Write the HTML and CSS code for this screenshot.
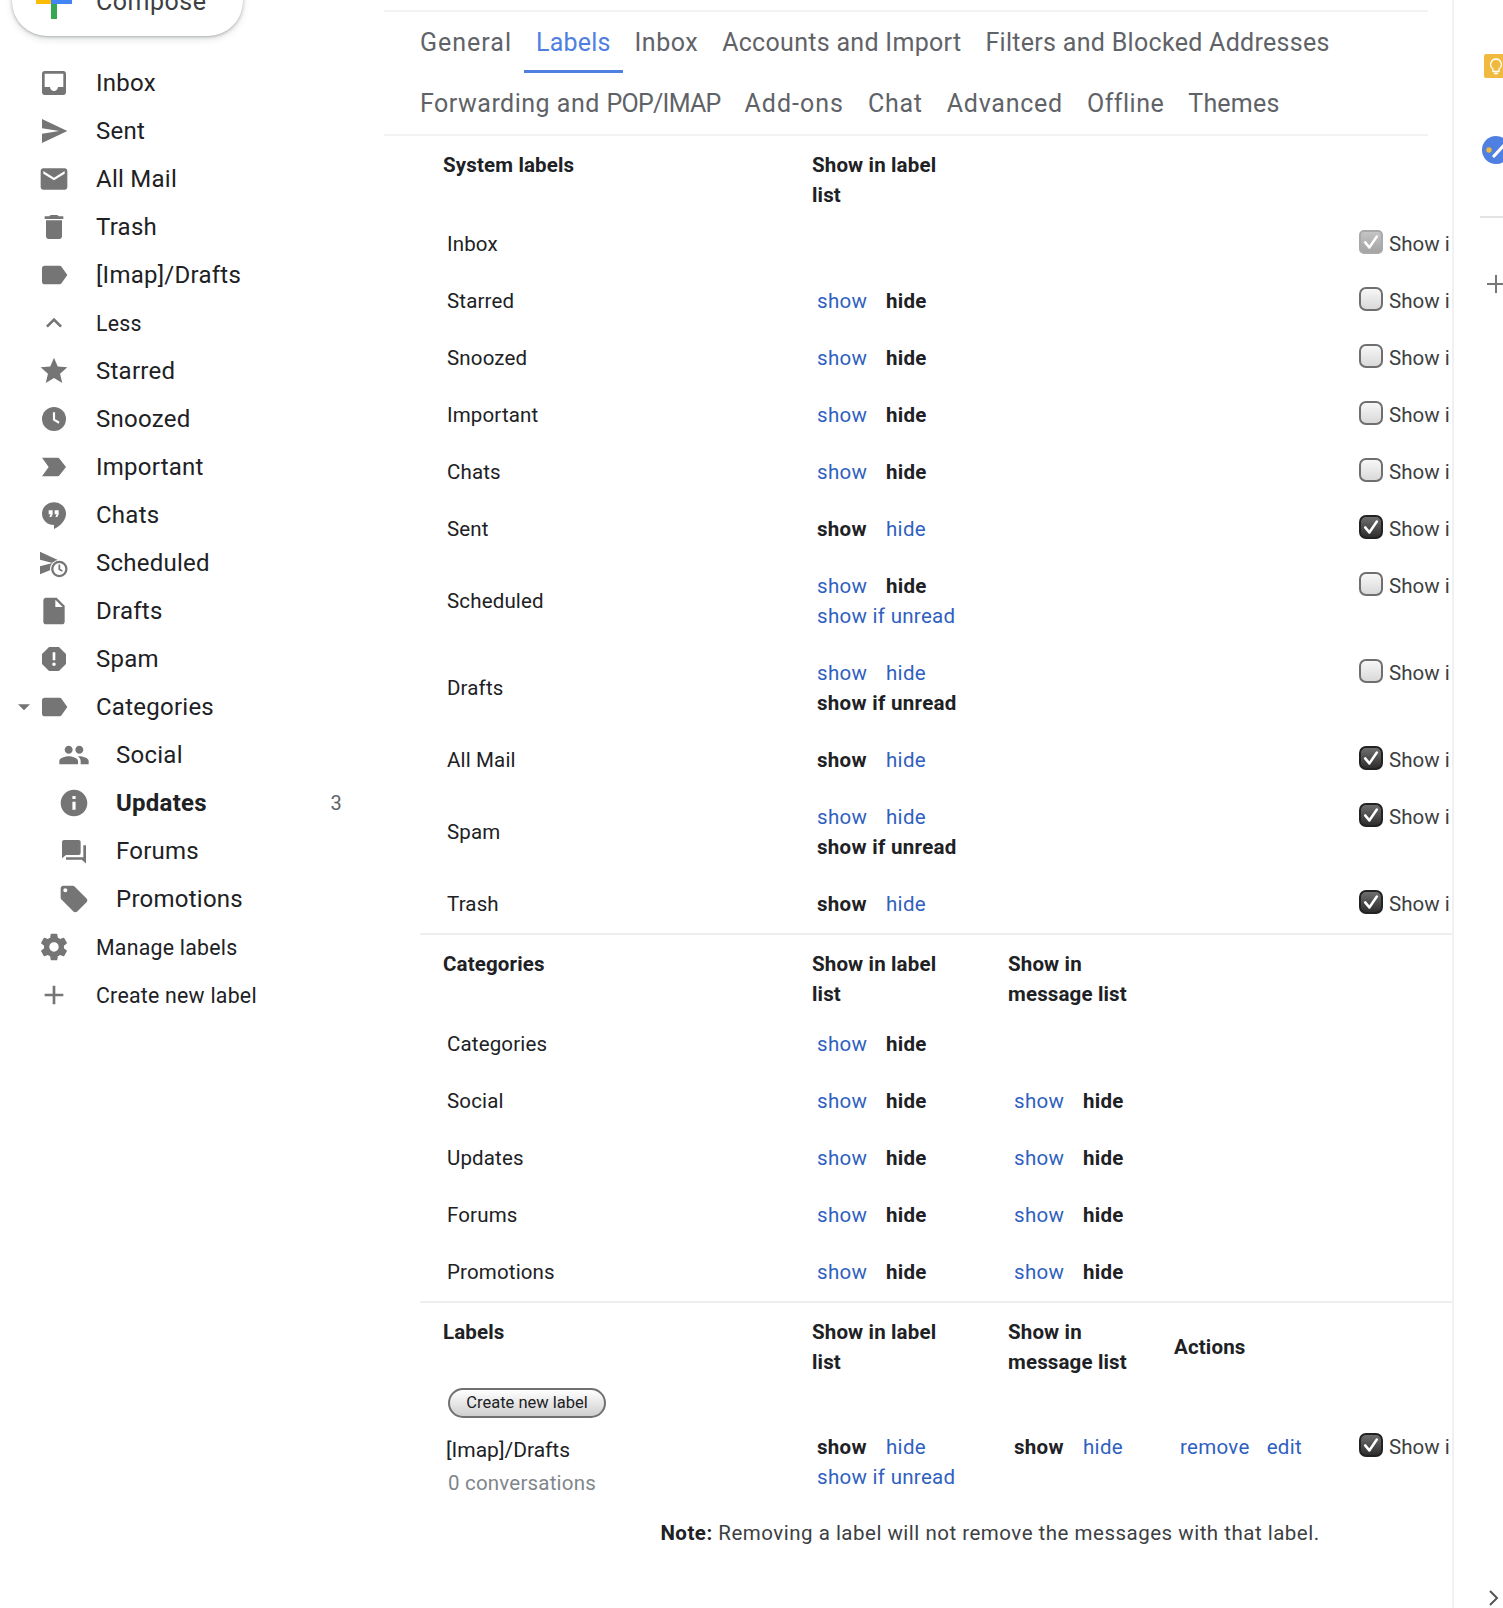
FILE: index.html
```html
<!DOCTYPE html>
<html lang="en">
<head>
<meta charset="utf-8">
<title>Settings - Labels</title>
<link rel="stylesheet" href="styles.css">
</head>
<body>
<svg class="defs" aria-hidden="true">
  <symbol id="i-inbox" viewBox="0 0 24 24"><path d="M19 3H5c-1.1 0-2 .9-2 2v14c0 1.1.9 2 2 2h14c1.1 0 2-.9 2-2V5c0-1.1-.9-2-2-2zm0 12h-4c0 1.66-1.35 3-3 3s-3-1.34-3-3H5V5h14v10z"/></symbol>
  <symbol id="i-sent" viewBox="0 0 24 24"><path d="M3 3v7l13 2-13 2v7l19-9z"/></symbol>
  <symbol id="i-mail" viewBox="0 0 24 24"><path d="M20 4H4c-1.1 0-2 .9-2 2v12c0 1.1.9 2 2 2h16c1.1 0 2-.9 2-2V6c0-1.1-.9-2-2-2zm0 4l-8 5-8-5V6l8 5 8-5v2z"/></symbol>
  <symbol id="i-trash" viewBox="0 0 24 24"><path d="M6 19c0 1.1.9 2 2 2h8c1.1 0 2-.9 2-2V7H6v12zM19 4h-3.5l-1-1h-5l-1 1H5v2h14V4z"/></symbol>
  <symbol id="i-label" viewBox="0 0 24 24"><path d="M17.63 5.84C17.27 5.33 16.67 5 16 5L5 5.01C3.9 5.01 3 5.9 3 7v10c0 1.1.9 1.99 2 1.99L16 19c.67 0 1.27-.33 1.63-.84L22 12l-4.37-6.16z"/></symbol>
  <symbol id="i-less" viewBox="0 0 24 24"><path d="M7.41 15.41L12 10.83l4.59 4.58L18 14l-6-6-6 6z"/></symbol>
  <symbol id="i-star" viewBox="0 0 24 24"><path d="M12 17.27L18.18 21l-1.64-7.03L22 9.24l-7.19-.61L12 2 9.19 8.63 2 9.24l5.46 4.73L5.82 21z"/></symbol>
  <symbol id="i-clock" viewBox="0 0 24 24"><circle cx="12" cy="12" r="9"/><path d="M12 7v5.5l3.8 2.3" fill="none" stroke="#fff" stroke-width="1.6"/></symbol>
  <symbol id="i-important" viewBox="0 0 24 24"><path d="M3 18.99l11.5.01c.67 0 1.27-.33 1.63-.84L21 12l-4.87-6.16c-.36-.51-.96-.84-1.63-.84L3 5.01 8 12l-5 6.99z"/></symbol>
  <symbol id="i-chat" viewBox="0 0 24 24"><path d="M12 2.500c-5 0-9 3.800-9 8.500s4 8.500 9 8.500v3c5-2.400 9-7 9-11.500 0-4.700-4-8.500-9-8.500zM11 11.500l-1 2H8.500l1-2H8V8.500h3zm4.500 0l-1 2H13l1-2h-1.500V8.500h3z"/></symbol>
  <symbol id="i-scheduled" viewBox="0 0 24 24"><path d="M1.500 3.500v6l9.500 2.500-9.500 2.500v6L21 12.500z"/><circle cx="16" cy="16.500" r="7" fill="#fff"/><circle cx="16" cy="16.500" r="5.300" fill="#fff" stroke="currentColor" stroke-width="1.700"/><path d="M16 13.200v3.500l2.300 1.400" fill="none" stroke="currentColor" stroke-width="1.300"/></symbol>
  <symbol id="i-draft" viewBox="0 0 24 24"><path d="M14 2H6c-1.100 0-1.990.9-1.990 2L4 20c0 1.100.89 2 1.990 2H18c1.100 0 2-.9 2-2V8l-6-6zm-1 7V3.500L18.500 9H13z"/></symbol>
  <symbol id="i-spam" viewBox="0 0 24 24"><path d="M15.730 3H8.270L3 8.270v7.460L8.270 21h7.460L21 15.730V8.270L15.730 3zM12 17.300c-.72 0-1.300-.58-1.300-1.300 0-.72.58-1.300 1.300-1.300.72 0 1.300.58 1.300 1.300 0 .72-.58 1.300-1.300 1.300zm1-4.300h-2V7h2v6z"/></symbol>
  <symbol id="i-arrow" viewBox="0 0 24 24"><path d="M7.500 10l4.500 4.500 4.500-4.500z"/></symbol>
  <symbol id="i-people" viewBox="0 0 24 24"><path d="M16 11c1.660 0 2.990-1.340 2.990-3S17.660 5 16 5c-1.660 0-3 1.340-3 3s1.340 3 3 3zm-8 0c1.660 0 2.990-1.340 2.990-3S9.660 5 8 5C6.340 5 5 6.340 5 8s1.340 3 3 3zm0 2c-2.330 0-7 1.170-7 3.500V19h14v-2.500c0-2.330-4.670-3.500-7-3.500zm8 0c-.29 0-.62.02-.97.05 1.160.84 1.970 1.970 1.970 3.450V19h6v-2.500c0-2.330-4.670-3.500-7-3.500z"/></symbol>
  <symbol id="i-info" viewBox="0 0 24 24"><path d="M12 2C6.480 2 2 6.480 2 12s4.480 10 10 10 10-4.480 10-10S17.520 2 12 2zm1.200 15h-2.400v-6h2.400v6zm0-8h-2.400V6.800h2.400V9z"/></symbol>
  <symbol id="i-forum" viewBox="0 0 24 24"><path d="M4.500 3.700h11a1.500 1.500 0 011.500 1.500v8.300a1.500 1.500 0 01-1.500 1.500H6l-3 2.500V5.200a1.500 1.500 0 011.500-1.500zM19 7.700h2v13.600L17.800 18.500H6V16.700h13z"/></symbol>
  <symbol id="i-tag" viewBox="0 0 24 24"><path d="M21.410 11.580l-9-9C12.050 2.220 11.550 2 11 2H4c-1.100 0-2 .9-2 2v7c0 .55.22 1.050.59 1.420l9 9c.36.36.86.58 1.410.58.55 0 1.050-.22 1.410-.59l7-7c.37-.36.59-.86.59-1.410 0-.55-.23-1.060-.59-1.420zM5.500 7C4.670 7 4 6.330 4 5.500S4.670 4 5.500 4 7 4.670 7 5.500 6.330 7 5.500 7z"/></symbol>
  <symbol id="i-gear" viewBox="0 0 24 24"><path d="M19.430 12.980c.04-.32.07-.64.07-.98s-.03-.66-.07-.98l2.110-1.650c.19-.15.24-.42.12-.64l-2-3.460c-.12-.22-.39-.3-.61-.22l-2.490 1c-.52-.4-1.080-.73-1.690-.98l-.38-2.650C14.460 2.180 14.250 2 14 2h-4c-.25 0-.46.18-.49.42l-.38 2.650c-.61.25-1.170.59-1.690.98l-2.490-1c-.23-.09-.49 0-.61.22l-2 3.460c-.13.22-.07.49.12.64l2.110 1.650c-.04.32-.07.65-.07.98s.03.66.07.98l-2.110 1.650c-.19.15-.24.42-.12.64l2 3.460c.12.22.39.3.61.22l2.490-1c.52.4 1.080.73 1.690.98l.38 2.650c.03.24.24.42.49.42h4c.25 0 .46-.18.49-.42l.38-2.650c.61-.25 1.170-.59 1.690-.98l2.490 1c.23.09.49 0 .61-.22l2-3.460c.12-.22.07-.49-.12-.64l-2.110-1.650zM12 15.500c-1.930 0-3.500-1.570-3.500-3.500s1.570-3.500 3.500-3.500 3.500 1.570 3.500 3.500-1.570 3.500-3.500 3.500z"/></symbol>
  <symbol id="i-add" viewBox="0 0 24 24"><path d="M19 13h-6v6h-2v-6H5v-2h6V5h2v6h6v2z"/></symbol>
  <symbol id="i-check" viewBox="0 0 24 24"><path d="M5 12.500l5 6L19 5.500" fill="none" stroke="#fff" stroke-width="3" stroke-linecap="round" stroke-linejoin="round"/></symbol>
</svg>

<aside class="sidebar">
  <div class="compose">
    <svg class="compose-plus" width="36" height="36" viewBox="0 0 36 36"><path fill="#fbbc04" d="M0 15h15v6H0z"/><path fill="#4285f4" d="M15 15h21v6H15z"/><path fill="#34a853" d="M15 21h6v15h-6z"/><path fill="#ea4335" d="M15 0h6v15h-6z"/></svg>
    <span class="compose-text">Compose</span>
  </div>
  <nav class="nav">
    <a class="nav-row"><svg class="ico"><use href="#i-inbox"/></svg><span>Inbox</span></a>
    <a class="nav-row"><svg class="ico"><use href="#i-sent"/></svg><span>Sent</span></a>
    <a class="nav-row"><svg class="ico"><use href="#i-mail"/></svg><span>All Mail</span></a>
    <a class="nav-row"><svg class="ico"><use href="#i-trash"/></svg><span>Trash</span></a>
    <a class="nav-row"><svg class="ico"><use href="#i-label"/></svg><span>[Imap]/Drafts</span></a>
    <a class="nav-row small"><svg class="ico"><use href="#i-less"/></svg><span>Less</span></a>
    <a class="nav-row"><svg class="ico"><use href="#i-star"/></svg><span>Starred</span></a>
    <a class="nav-row"><svg class="ico"><use href="#i-clock"/></svg><span>Snoozed</span></a>
    <a class="nav-row"><svg class="ico"><use href="#i-important"/></svg><span>Important</span></a>
    <a class="nav-row"><svg class="ico"><use href="#i-chat"/></svg><span>Chats</span></a>
    <a class="nav-row"><svg class="ico"><use href="#i-scheduled"/></svg><span>Scheduled</span></a>
    <a class="nav-row"><svg class="ico"><use href="#i-draft"/></svg><span>Drafts</span></a>
    <a class="nav-row"><svg class="ico"><use href="#i-spam"/></svg><span>Spam</span></a>
    <a class="nav-row has-arrow"><svg class="ico arrow"><use href="#i-arrow"/></svg><svg class="ico"><use href="#i-label"/></svg><span>Categories</span></a>
    <a class="nav-row sub"><svg class="ico"><use href="#i-people"/></svg><span>Social</span></a>
    <a class="nav-row sub unread"><svg class="ico"><use href="#i-info"/></svg><span>Updates</span><em class="count">3</em></a>
    <a class="nav-row sub"><svg class="ico"><use href="#i-forum"/></svg><span>Forums</span></a>
    <a class="nav-row sub"><svg class="ico"><use href="#i-tag"/></svg><span>Promotions</span></a>
    <a class="nav-row small"><svg class="ico"><use href="#i-gear"/></svg><span>Manage labels</span></a>
    <a class="nav-row small"><svg class="ico"><use href="#i-add"/></svg><span>Create new label</span></a>
  </nav>
</aside>

<main class="main">
  <div class="tabs">
    <a class="tab wide">General</a>
    <a class="tab active">Labels</a>
    <a class="tab">Inbox</a>
    <a class="tab tight">Accounts and Import</a>
    <a class="tab tight">Filters and Blocked Addresses</a>
    <a class="tab">Forwarding and <span class="caps">POP/IMAP</span></a>
    <a class="tab wide">Add-ons</a>
    <a class="tab mid">Chat</a>
    <a class="tab mid">Advanced</a>
    <a class="tab">Offline</a>
    <a class="tab narrow-tab">Themes</a>
  </div>

  <section class="group">
    <div class="head first">
      <div>System labels</div>
      <div class="narrow">Show in label list</div>
    </div>
    <div class="row"><div class="name">Inbox</div><div></div><div></div><div></div><div class="imap"><span class="box disabled"><svg><use href="#i-check"/></svg></span>Show i</div></div>
    <div class="row"><div class="name">Starred</div><div><a class="opt">show</a><b class="opt on">hide</b></div><div></div><div></div><div class="imap"><span class="box"></span>Show i</div></div>
    <div class="row"><div class="name">Snoozed</div><div><a class="opt">show</a><b class="opt on">hide</b></div><div></div><div></div><div class="imap"><span class="box"></span>Show i</div></div>
    <div class="row"><div class="name">Important</div><div><a class="opt">show</a><b class="opt on">hide</b></div><div></div><div></div><div class="imap"><span class="box"></span>Show i</div></div>
    <div class="row"><div class="name">Chats</div><div><a class="opt">show</a><b class="opt on">hide</b></div><div></div><div></div><div class="imap"><span class="box"></span>Show i</div></div>
    <div class="row"><div class="name">Sent</div><div><b class="opt on">show</b><a class="opt">hide</a></div><div></div><div></div><div class="imap"><span class="box checked"><svg><use href="#i-check"/></svg></span>Show i</div></div>
    <div class="row"><div class="name">Scheduled</div><div><a class="opt">show</a><b class="opt on">hide</b><br><a class="opt">show if unread</a></div><div></div><div></div><div class="imap"><span class="box"></span>Show i</div></div>
    <div class="row"><div class="name">Drafts</div><div><a class="opt">show</a><a class="opt">hide</a><br><b class="opt on">show if unread</b></div><div></div><div></div><div class="imap"><span class="box"></span>Show i</div></div>
    <div class="row"><div class="name">All Mail</div><div><b class="opt on">show</b><a class="opt">hide</a></div><div></div><div></div><div class="imap"><span class="box checked"><svg><use href="#i-check"/></svg></span>Show i</div></div>
    <div class="row"><div class="name">Spam</div><div><a class="opt">show</a><a class="opt">hide</a><br><b class="opt on">show if unread</b></div><div></div><div></div><div class="imap"><span class="box checked"><svg><use href="#i-check"/></svg></span>Show i</div></div>
    <div class="row"><div class="name">Trash</div><div><b class="opt on">show</b><a class="opt">hide</a></div><div></div><div></div><div class="imap"><span class="box checked"><svg><use href="#i-check"/></svg></span>Show i</div></div>
  </section>

  <section class="group ruled cats">
    <div class="head">
      <div>Categories</div>
      <div class="narrow">Show in label list</div>
      <div class="narrow">Show in message list</div>
    </div>
    <div class="row"><div class="name">Categories</div><div><a class="opt">show</a><b class="opt on">hide</b></div></div>
    <div class="row"><div class="name">Social</div><div><a class="opt">show</a><b class="opt on">hide</b></div><div><a class="opt">show</a><b class="opt on">hide</b></div></div>
    <div class="row"><div class="name">Updates</div><div><a class="opt">show</a><b class="opt on">hide</b></div><div><a class="opt">show</a><b class="opt on">hide</b></div></div>
    <div class="row"><div class="name">Forums</div><div><a class="opt">show</a><b class="opt on">hide</b></div><div><a class="opt">show</a><b class="opt on">hide</b></div></div>
    <div class="row"><div class="name">Promotions</div><div><a class="opt">show</a><b class="opt on">hide</b></div><div><a class="opt">show</a><b class="opt on">hide</b></div></div>
  </section>

  <section class="group ruled">
    <div class="head labels-head">
      <div>Labels</div>
      <div class="narrow">Show in label list</div>
      <div class="narrow">Show in message list</div>
      <div class="actions-head">Actions</div>
    </div>
    <button class="create" type="button">Create new label</button>
    <div class="row user-row">
      <div class="user-name">[Imap]/Drafts<span class="convs">0 conversations</span></div>
      <div><b class="opt on">show</b><a class="opt">hide</a><br><a class="opt">show if unread</a></div>
      <div><b class="opt on">show</b><a class="opt">hide</a></div>
      <div><a class="act">remove</a><a class="act">edit</a></div>
      <div class="imap"><span class="box checked"><svg><use href="#i-check"/></svg></span>Show i</div>
    </div>
    <p class="note"><b>Note:</b> Removing a label will not remove the messages with that label.</p>
  </section>
</main>

<aside class="rail">
  <div class="keep"><svg width="24" height="24" viewBox="0 0 24 24"><path d="M12 5a5.500 5.500 0 00-3 10v2.500h6V15a5.500 5.500 0 00-3-10zM10 19.500h4" fill="none" stroke="#fff" stroke-width="1.300"/></svg></div>
  <div class="tasks"><svg width="28" height="28" viewBox="0 0 28 28"><circle cx="14" cy="14" r="14" fill="#4f7fe0"/><circle cx="7" cy="14" r="2.700" fill="#f0b93f"/><path d="M12 20L24 7" stroke="#fff" stroke-width="3.200" stroke-linecap="round"/></svg></div>
  <div class="rail-rule"></div>
  <svg class="rail-add" width="20" height="20" viewBox="0 0 20 20"><path d="M9 1h2v8h8v2h-8v8H9v-8H1V9h8z" fill="#777"/></svg>
  <svg class="rail-chev" width="14" height="16" viewBox="0 0 14 16"><path d="M3 1l7 7-7 7" fill="none" stroke="#555" stroke-width="2"/></svg>
</aside>
</body>
</html>
```
FILE: styles.css
```css
* { box-sizing: border-box; }
html, body { height: 100%; }
body {
  margin: 0;
  width: 1503px;
  height: 1608px;
  display: flex;
  overflow: hidden;
  background: #fff;
  color: #202124;
  font-family: Roboto, "Liberation Sans", sans-serif;
}
.defs { position: absolute; width: 0; height: 0; }

/* sidebar */
.sidebar { width: 384px; flex: none; }
.compose {
  width: 231px;
  height: 70px;
  margin: -34px 0 23px 12px;
  border-radius: 35px;
  background: #fff;
  box-shadow: 0 1px 3px rgba(60,64,67,.35), 0 3px 6px 1px rgba(60,64,67,.12);
  display: flex;
  align-items: center;
  padding-left: 24px;
}
.compose-plus { flex: none; }
.compose-text { margin-left: 24px; font-size: 25px; letter-spacing: .5px; color: #3c4043; }
.nav-row {
  height: 48px;
  display: flex;
  align-items: center;
  padding-left: 38px;
  font-size: 24px;
  letter-spacing: .25px;
  color: #202124;
  white-space: nowrap;
}
.nav-row span { margin-left: 26px; }
.nav-row.small { font-size: 21.300px; }
.nav-row.sub { padding-left: 58px; }
.nav-row.sub span { margin-left: 26px; }
.nav-row.has-arrow { padding-left: 8px; }
.ico { width: 32px; height: 32px; flex: none; fill: #757575; color: #757575; }
.arrow { margin-right: -2px; }
.unread span { font-weight: 700; }
.count { margin-left: auto; margin-right: 42px; font-style: normal; font-size: 20px; color: #5f6368; }

/* main */
.main { width: 1068px; flex: none; overflow: hidden; padding-top: 10px; }
.tabs {
  width: 1044px;
  display: flex;
  flex-wrap: wrap;
  padding-left: 24px;
  border-top: 2px solid #f1f3f4;
  border-bottom: 2px solid #f1f3f4;
}
.tab {
  height: 61px;
  padding: 2px 12px 0;
  display: flex;
  align-items: center;
  font-size: 25px;
  letter-spacing: .5px;
  color: #5f6368;
  border-bottom: 3px solid transparent;
  white-space: pre;
}
.tab.wide { letter-spacing: 1px; }
.tab.mid { letter-spacing: .75px; }
.tab.tight { letter-spacing: .3px; }
.tab.narrow-tab { letter-spacing: .2px; }
.tab.active { color: #4f7fe0; border-bottom-color: #4f7fe0; letter-spacing: .2px; }
.caps { letter-spacing: -.75px; }

/* tables */
.group { margin-left: 36px; font-size: 20.500px; line-height: 30px; letter-spacing: .15px; }
.cats { padding-bottom: 1px; }
.ruled { border-top: 2px solid #eeeeee; }
.head {
  display: grid;
  grid-template-columns: 369px 196px 166px 1fr;
  padding: 14px 0 6.500px 23px;
  font-weight: 700;
}
.head.first { padding-bottom: 5.500px; }
.labels-head { padding-top: 13.500px; padding-bottom: 0; }
.narrow { max-width: 140px; }
.actions-head { align-self: center; }
.row {
  display: grid;
  grid-template-columns: 370px 197px 166px 179px max-content;
  padding: 13.500px 0 13.500px 27px;
  align-items: start;
}
.name { align-self: center; }
.opt { display: inline-block; min-width: 69px; color: #2f5fbf; white-space: nowrap; letter-spacing: .3px; }
.opt.on { color: #202124; font-weight: 700; }
.opt:last-of-type:not(:first-of-type) { min-width: 0; }
.act { color: #2f5fbf; margin-right: 17px; letter-spacing: .3px; }
.imap { display: flex; align-items: center; gap: 6px; white-space: nowrap; color: #3c4043; letter-spacing: 0; }
.box {
  width: 24px;
  height: 24px;
  margin: -4px 0 0;
  border-radius: 7px;
  border: 2px solid #6f6f6f;
  background: linear-gradient(#f7f7f7, #d9d9d9);
  display: flex;
  align-items: center;
  justify-content: center;
  flex: none;
}
.box svg { width: 20px; height: 20px; }
.box.checked { border-color: #222; background: linear-gradient(#6e6e6e, #2e2e2e); }
.box.disabled { border-color: #a9a9a9; background: linear-gradient(#c4c4c4, #a4a4a4); border-radius: 5px; }
.create {
  display: block;
  width: 158px;
  height: 30px;
  margin: 11px 0 0 28px;
  padding: 0;
  border: 2px solid #707070;
  border-radius: 15px;
  background: linear-gradient(#ffffff, #cfcfcf);
  font-family: inherit;
  font-size: 16.500px;
  color: #202124;
}
.user-row { padding: 14px 0 0 27px; }
.user-name { margin: 3px 0 0 -1px; font-size: 21px; letter-spacing: 0; }
.convs { display: block; margin: 3px 0 0 2px; font-size: 20.500px; color: #80868b; letter-spacing: .2px; }
.note {
  margin: 20px 0 0;
  padding-left: 108px;
  text-align: center;
  letter-spacing: .5px;
  color: #3c4043;
}
.note b { color: #202124; }

/* right rail */
.rail {
  width: 51px;
  flex: none;
  height: 100%;
  border-left: 2px solid #f1f1f1;
  padding: 54px 0 2px;
  display: flex;
  flex-direction: column;
  align-items: flex-start;
  overflow: hidden;
}
.keep {
  width: 24px;
  height: 24px;
  flex: none;
  margin-left: 30px;
  border-radius: 2px;
  background: #f0b93f;
}
.tasks { width: 28px; height: 28px; flex: none; margin: 58px 0 0 28px; }
.rail-rule { width: 30px; height: 2px; flex: none; margin: 52px 0 0 26px; background: #e3e3e3; }
.rail-add { flex: none; margin: 56px 0 0 32px; }
.rail-chev { flex: none; margin: auto 0 0 33px; }
```
